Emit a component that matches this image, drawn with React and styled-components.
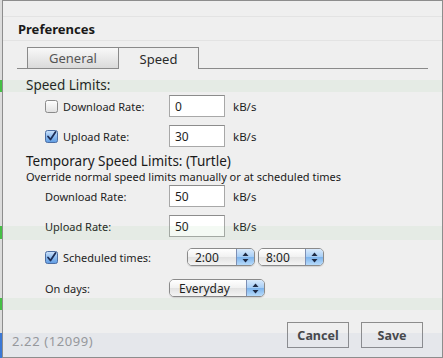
import styled, { createGlobalStyle } from 'styled-components'

const GlobalStyle = createGlobalStyle`
	html, body {
		margin: 0;
		padding: 0;
		background: #efefef;
	}
	body {
		font-family: 'Noto Sans', 'DejaVu Sans', sans-serif;
	}
`

const Root = styled.div`
	display: flex;
	width: 443px;
	height: 358px;
	overflow: hidden;
`

const Strip = styled.div`
	flex: none;
	width: 2px;
	background: linear-gradient(
		to bottom,
		#dcdcdc 0, #dcdcdc 80px, #45c045 80px, #45c045 92px, #dcdcdc 92px,
		#dcdcdc 226px, #45c045 226px, #45c045 239px, #dcdcdc 239px,
		#dcdcdc 298px, #45c045 298px, #45c045 310px, #dcdcdc 310px,
		#dcdcdc 333px, #3b78d6 333px
	);
`

const Dialog = styled.div`
	position: relative;
	flex: 1;
	display: flex;
	flex-direction: column;
	border: 1px solid #8d8d8d;
	background: #efefef;
	color: #1e1e1e;
`

const Band = styled.div`
	position: absolute;
	left: 0;
	right: 0;
	pointer-events: none;
	background: ${(p) => (p.$blue ? 'rgba(120, 140, 190, 0.08)' : 'rgba(120, 190, 110, 0.08)')};
`

const TopStrip = styled.div`
	height: 15px;
	border-bottom: 1px solid #e3e3e3;
`

const Header = styled.div`
	display: flex;
	align-items: center;
	height: 24px;
	padding: 1px 0 0 15px;
	box-sizing: border-box;
	border-bottom: 1px solid #e3e3e3;
	font-size: 13px;
	font-weight: 700;
	color: #1a1a1a;
`

const TabBar = styled.div`
	display: flex;
	align-items: flex-start;
	margin: 6px 14px 0;
	padding-left: 10px;
	border-bottom: 1px solid #8a8a8a;
`

const Tab = styled.div`
	display: flex;
	align-items: center;
	justify-content: center;
	box-sizing: border-box;
	width: ${(p) => p.$width}px;
	height: ${(p) => (p.$active ? 22 : 21)}px;
	margin-bottom: ${(p) => (p.$active ? -1 : 0)}px;
	margin-left: ${(p) => (p.$active ? -1 : 0)}px;
	border: 1px solid #8a8a8a;
	border-bottom: none;
	background: ${(p) => (p.$active ? '#efefef' : 'linear-gradient(#f8f8f8, #dadada)')};
	color: ${(p) => (p.$active ? '#2a2a2a' : '#555')};
	font-size: 13px;
`

const Body = styled.div`
	display: flex;
	flex-direction: column;
	padding-left: 23px;
`

const Heading = styled.div`
	margin-top: ${(p) => p.$top}px;
	font-size: 13.5px;
	line-height: 16px;
	color: #1a1a1a;
`

const Note = styled.div`
	margin-top: 1px;
	font-size: 11px;
	line-height: 13px;
	color: #1a1a1a;
`

const Row = styled.div`
	display: flex;
	align-items: center;
	height: ${(p) => p.$h || 22}px;
	margin-top: ${(p) => p.$top}px;
	padding-left: 19px;
`

const LabelCell = styled.div`
	display: flex;
	align-items: center;
	gap: 5px;
	width: 124px;
	font-size: 11px;
	color: #1e1e1e;
`

const Field = styled.input`
	box-sizing: border-box;
	width: 56px;
	height: 22px;
	margin: 0;
	padding: 0 5px;
	border: 1px solid #a8a8a8;
	border-top-color: #8c8c8c;
	background: #fff;
	font-family: inherit;
	font-size: 12px;
	color: #1e1e1e;
	outline: none;
`

const Unit = styled.span`
	margin-left: 8px;
	font-size: 11.5px;
	color: #1e1e1e;
`

const Popups = styled.div`
	display: flex;
	gap: 3px;
	margin-left: ${(p) => p.$indent || 0}px;
`

const Popup = styled.div`
	display: flex;
	box-sizing: border-box;
	width: ${(p) => p.$width}px;
	height: 18px;
	border: 1px solid #8a8a8a;
	border-radius: 5px;
	overflow: hidden;
	box-shadow: 0 1px 1px rgba(0, 0, 0, 0.12);
`

const PopupText = styled.div`
	flex: 1;
	display: flex;
	align-items: center;
	padding-left: ${(p) => p.$pad}px;
	background: linear-gradient(#ffffff, #f1f1f1 50%, #e2e2e2 51%, #f4f4f4);
	font-size: 12px;
	color: #1e1e1e;
`

const PopupArrows = styled.div`
	display: flex;
	align-items: center;
	justify-content: center;
	width: 17px;
	border-left: 1px solid #7d8fb4;
	background: linear-gradient(#d9eafc, #a6cdf5 50%, #7cb3ec 51%, #b7dbfb);
`

const Footer = styled.div`
	display: flex;
	align-items: flex-end;
	margin-top: auto;
	padding: 0 19px 9px 9px;
`

const Version = styled.div`
	font-size: 13px;
	line-height: 14px;
	letter-spacing: 0.6px;
	color: #9a9a9a;
`

const Buttons = styled.div`
	display: flex;
	gap: 12px;
	margin-left: auto;
`

const Button = styled.button`
	box-sizing: border-box;
	width: 62px;
	height: 26px;
	margin: 0;
	padding: 0;
	border: 1px solid #8c8c8c;
	background: #efefef;
	font-family: inherit;
	font-size: 12.5px;
	font-weight: 700;
	color: #444;
`

const CheckBox = ({ checked }) => (
	<svg width='13' height='13' viewBox='0 0 13 13'>
		<defs>
			<linearGradient id={checked ? 'cbOn' : 'cbOff'} x1='0' y1='0' x2='0' y2='1'>
				{checked ? (
					<>
						<stop offset='0' stopColor='#cfe3fa' />
						<stop offset='0.5' stopColor='#8fbdf0' />
						<stop offset='1' stopColor='#5e9be2' />
					</>
				) : (
					<>
						<stop offset='0' stopColor='#ffffff' />
						<stop offset='1' stopColor='#e0e0e0' />
					</>
				)}
			</linearGradient>
		</defs>
		<rect
			x='0.5'
			y='0.5'
			width='12'
			height='12'
			rx='2'
			fill={`url(#${checked ? 'cbOn' : 'cbOff'})`}
			stroke={checked ? '#4d6ea3' : '#8a8a8a'}
		/>
		{checked && (
			<path d='M3 6.5 L5.5 9.5 L10.5 2' fill='none' stroke='#1c2c55' strokeWidth='1.8' strokeLinecap='round' strokeLinejoin='round' />
		)}
	</svg>
)

const Arrows = () => (
	<svg width='7' height='11' viewBox='0 0 7 11'>
		<path d='M3.5 0.5 L6.5 4 L0.5 4 Z' fill='#1e2a44' />
		<path d='M3.5 10.5 L6.5 7 L0.5 7 Z' fill='#1e2a44' />
	</svg>
)

const Select = ({ value, width, pad }) => (
	<Popup $width={width}>
		<PopupText $pad={pad}>{value}</PopupText>
		<PopupArrows>
			<Arrows />
		</PopupArrows>
	</Popup>
)

const App = () => {
	return (
		<Root>
			<GlobalStyle />
			<Strip />
			<Dialog>
				<TopStrip />
				<Header>Preferences</Header>
				<TabBar>
					<Tab $width={92}>General</Tab>
					<Tab $width={81} $active>Speed</Tab>
				</TabBar>
				<Body>
					<Heading $top={8}>Speed Limits:</Heading>
					<Row $top={2}>
						<LabelCell>
							<CheckBox />
							Download Rate:
						</LabelCell>
						<Field readOnly value='0' />
						<Unit>kB/s</Unit>
					</Row>
					<Row $top={8}>
						<LabelCell>
							<CheckBox checked />
							Upload Rate:
						</LabelCell>
						<Field readOnly value='30' />
						<Unit>kB/s</Unit>
					</Row>
					<Heading $top={6}>Temporary Speed Limits: (Turtle)</Heading>
					<Note>Override normal speed limits manually or at scheduled times</Note>
					<Row $top={2}>
						<LabelCell>Download Rate:</LabelCell>
						<Field readOnly value='50' />
						<Unit>kB/s</Unit>
					</Row>
					<Row $top={8}>
						<LabelCell>Upload Rate:</LabelCell>
						<Field readOnly value='50' />
						<Unit>kB/s</Unit>
					</Row>
					<Row $top={11} $h={18}>
						<LabelCell>
							<CheckBox checked />
							Scheduled times:
						</LabelCell>
						<Popups $indent={18}>
							<Select value='2:00' width={68} pad={7} />
							<Select value='8:00' width={66} pad={7} />
						</Popups>
					</Row>
					<Row $top={13} $h={18}>
						<LabelCell>On days:</LabelCell>
						<Popups>
							<Select value='Everyday' width={96} pad={9} />
						</Popups>
					</Row>
				</Body>
				<Footer>
					<Version>2.22 (12099)</Version>
					<Buttons>
						<Button>Cancel</Button>
						<Button>Save</Button>
					</Buttons>
				</Footer>
				<Band style={{ top: 79, height: 12 }} />
				<Band style={{ top: 225, height: 14 }} />
				<Band style={{ top: 297, height: 12 }} />
				<Band $blue style={{ top: 332, bottom: 0 }} />
			</Dialog>
		</Root>
	)
}

export default App
